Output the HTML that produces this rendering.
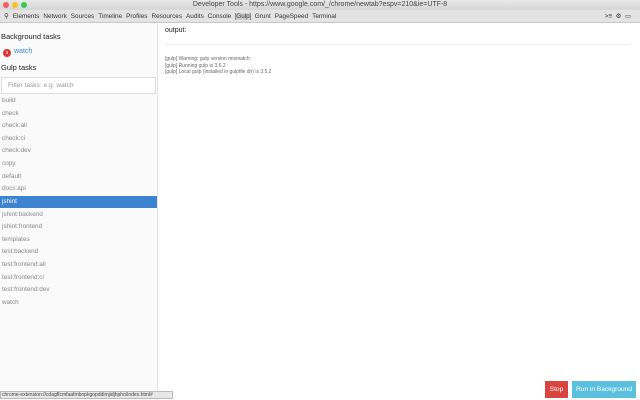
<!DOCTYPE html>
<html><head><style>
*{margin:0;padding:0;box-sizing:border-box}
body{width:640px;height:400px;overflow:hidden;background:#fff;font-family:"Liberation Sans",sans-serif;position:relative}
.title{position:absolute;left:0;top:0;width:640px;height:10px;background:linear-gradient(#e8e8e8,#d6d6d6);font-size:7px;color:#444;text-align:center;line-height:10px}
.dot{position:absolute;top:2px;width:6px;height:6px;border-radius:50%}
.tabs{position:absolute;left:0;top:10px;width:640px;height:13px;background:#e4e4e4;border-bottom:1px solid #c8c8c8;font-size:6.4px;color:#333;line-height:13px;white-space:nowrap}
.tabs span{margin-right:4px}
.side{position:absolute;left:0;top:23px;width:158px;height:377px;background:#fafafa;border-right:1px solid #e3e3e3}
.h{position:absolute;left:1px;font-size:7.5px;color:#222}
.item{position:absolute;left:0;width:157px;height:12px;font-size:6.4px;color:#888;line-height:12px;padding-left:2px}
.sel{background:#3d84d0;color:#fff}
.filter{position:absolute;left:1px;top:54px;width:155px;height:17px;border:1px solid #ddd;background:#fff;font-size:6.6px;color:#999;line-height:15px;padding-left:6px}
.out{position:absolute;left:165px;top:27px;font-size:7px;color:#222}
.line{position:absolute;left:165px;top:44px;width:465px;height:1px;background:#eee}
.log{position:absolute;left:165px;top:56px;font-size:5px;color:#666;line-height:6.7px}
.btn{position:absolute;top:381px;height:17px;font-size:6.6px;color:#fff;line-height:17px;text-align:center}
.status{position:absolute;left:0;top:391px;width:173px;height:8px;background:#e8e8e8;border:1px solid #bbb;font-size:5px;color:#444;line-height:7px;padding-left:1px;white-space:nowrap;overflow:hidden}
</style></head><body>
<div class="title">Developer Tools - https://www.google.com/_/chrome/newtab?espv=210&amp;ie=UTF-8
<div class="dot" style="left:3px;background:#f25f58"></div><div class="dot" style="left:12px;background:#fbbe2f"></div><div class="dot" style="left:21px;background:#3ec84a"></div></div>
<div class="tabs"><span style="margin-left:4px">&#9906;</span><span>Elements</span><span>Network</span><span>Sources</span><span>Timeline</span><span>Profiles</span><span>Resources</span><span>Audits</span><span>Console</span><span style="background:#cfcfcf;border-left:1px solid #888;border-right:1px solid #888">Gulp</span><span>Grunt</span><span>PageSpeed</span><span>Terminal</span>
<span style="position:absolute;right:5px;top:0">&gt;≡ &nbsp;⚙ &nbsp;▭</span></div>
<div class="side">
<div class="h" style="top:9px">Background tasks</div>
<div style="position:absolute;left:3px;top:26px;width:8px;height:8px;border-radius:50%;background:#d33;color:#fff;font-size:5px;text-align:center;line-height:8px">x</div>
<div style="position:absolute;left:14px;top:25px;font-size:7px;color:#3d84d0">watch</div>
<div class="h" style="top:40px">Gulp tasks</div>
<div class="filter">Filter tasks: e.g. watch</div>
</div>
<div class="item" style="top:95px">build</div>
<div class="item" style="top:107.6px">check</div>
<div class="item" style="top:120.2px">check:all</div>
<div class="item" style="top:132.8px">check:ci</div>
<div class="item" style="top:145.4px">check:dev</div>
<div class="item" style="top:158px">copy</div>
<div class="item" style="top:170.6px">default</div>
<div class="item" style="top:183.2px">docs:api</div>
<div class="item sel" style="top:196px">jshint</div>
<div class="item" style="top:208.6px">jshint:backend</div>
<div class="item" style="top:221.2px">jshint:frontend</div>
<div class="item" style="top:233.8px">templates</div>
<div class="item" style="top:246.4px">test:backend</div>
<div class="item" style="top:259px">test:frontend:all</div>
<div class="item" style="top:271.6px">test:frontend:ci</div>
<div class="item" style="top:284.2px">test:frontend:dev</div>
<div class="item" style="top:296.8px">watch</div>
<div class="out">output:</div>
<div class="line"></div>
<div class="log">[gulp] Warning: gulp version mismatch:<br>[gulp] Running gulp is 3.6.2<br>[gulp] Local gulp (installed in gulpfile dir) is 3.5.2</div>
<div class="btn" style="left:545px;width:23px;background:#d9443f">Stop</div>
<div class="btn" style="left:572px;width:64px;background:#5bc0de">Run in Background</div>
<div class="status">chrome-extension://cdagffcmfaafmbnpkgopddimjidjhpho/index.html#</div>
</body></html>
